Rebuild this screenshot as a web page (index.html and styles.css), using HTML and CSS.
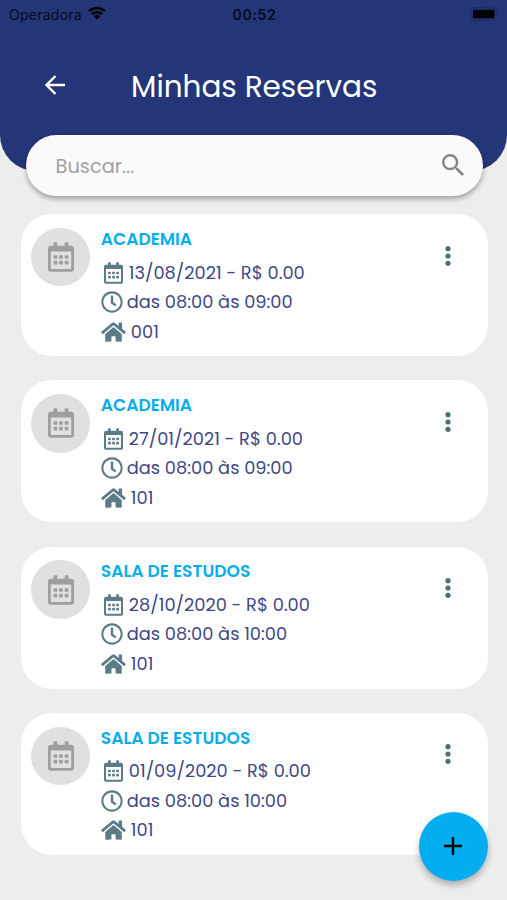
FILE: index.html
```html
<!DOCTYPE html>
<html lang="pt-BR">
<head>
<meta charset="utf-8">
<title>Minhas Reservas</title>
<link rel="stylesheet" href="styles.css">
</head>
<body>
<svg class="sprite" aria-hidden="true">
  <symbol id="calendar" viewBox="0 0 448 512"><path d="M148 288h-40c-6.600 0-12-5.400-12-12v-40c0-6.600 5.400-12 12-12h40c6.600 0 12 5.400 12 12v40c0 6.600-5.400 12-12 12zm108-12v-40c0-6.600-5.400-12-12-12h-40c-6.600 0-12 5.400-12 12v40c0 6.600 5.400 12 12 12h40c6.600 0 12-5.400 12-12zm96 0v-40c0-6.600-5.400-12-12-12h-40c-6.600 0-12 5.400-12 12v40c0 6.600 5.400 12 12 12h40c6.600 0 12-5.400 12-12zm-96 96v-40c0-6.600-5.400-12-12-12h-40c-6.600 0-12 5.400-12 12v40c0 6.600 5.400 12 12 12h40c6.600 0 12-5.400 12-12zm-96 0v-40c0-6.600-5.400-12-12-12h-40c-6.600 0-12 5.400-12 12v40c0 6.600 5.400 12 12 12h40c6.600 0 12-5.400 12-12zm192 0v-40c0-6.600-5.400-12-12-12h-40c-6.600 0-12 5.400-12 12v40c0 6.600 5.400 12 12 12h40c6.600 0 12-5.400 12-12zm96-260v352c0 26.500-21.500 48-48 48H48c-26.500 0-48-21.500-48-48V112c0-26.500 21.500-48 48-48h48V12c0-6.600 5.400-12 12-12h40c6.600 0 12 5.400 12 12v52h128V12c0-6.600 5.400-12 12-12h40c6.600 0 12 5.400 12 12v52h48c26.500 0 48 21.500 48 48zm-48 346V160H48v298c0 3.300 2.700 6 6 6h340c3.300 0 6-2.700 6-6z"/></symbol>
  <symbol id="clock" viewBox="0 0 512 512"><path d="M256 8C119 8 8 119 8 256s111 248 248 248 248-111 248-248S393 8 256 8zm0 448c-110.500 0-200-89.500-200-200S145.500 56 256 56s200 89.500 200 200-89.500 200-200 200zm61.800-104.400l-84.900-61.700c-3.100-2.300-4.900-5.900-4.900-9.700V116c0-6.600 5.400-12 12-12h32c6.600 0 12 5.400 12 12v141.700l66.800 48.600c5.400 3.900 6.500 11.400 2.600 16.800L334.600 349c-3.900 5.300-11.400 6.500-16.800 2.600z"/></symbol>
  <symbol id="home" viewBox="0 0 576 512"><path d="M280.370 148.260L96 300.110V464a16 16 0 0 0 16 16l112.060-.29a16 16 0 0 0 15.920-16V368a16 16 0 0 1 16-16h64a16 16 0 0 1 16 16v95.640a16 16 0 0 0 16 16.050L464 480a16 16 0 0 0 16-16V300L295.670 148.260a12.190 12.190 0 0 0-15.300 0zM571.600 251.470L488 182.560V44.050a12 12 0 0 0-12-12h-56a12 12 0 0 0-12 12v72.610L318.470 43a48 48 0 0 0-61 0L4.340 251.470a12 12 0 0 0-1.600 16.900l25.500 31A12 12 0 0 0 45.150 301l235.220-193.740a12.190 12.190 0 0 1 15.300 0L530.900 301a12 12 0 0 0 16.900-1.600l25.500-31a12 12 0 0 0-1.700-16.930z"/></symbol>
  <symbol id="dots" viewBox="0 0 6 20"><circle cx="3" cy="2.700" r="2.600"/><circle cx="3" cy="10" r="2.600"/><circle cx="3" cy="17.300" r="2.600"/></symbol>
</svg>
<div class="app">
  <header class="header">
    <div class="status">
      <div class="carrier"><span class="operator">Operadora</span>
        <svg class="wifi" viewBox="0 0 18 14"><path d="M1.200 5.200a11.200 11.200 0 0 1 15.600 0M4 8.200a7.200 7.200 0 0 1 10 0" fill="none" stroke="#000" stroke-width="2.500"/><path d="M5.800 10.200a4.700 4.700 0 0 1 6.400 0L9 13.500z"/></svg>
      </div>
      <span class="time">00:52</span>
      <svg class="battery" viewBox="0 0 30 14"><rect x="1" y=".7" width="25.500" height="12.300" rx="3.500" fill="none" stroke="#1b2a60"/><rect x="3" y="2.700" width="21.500" height="8.500" rx="1.500"/><path d="M28 5q1.300 1.800 0 3.700z" fill="#162453"/></svg>
    </div>
    <div class="bar">
      <svg class="back" viewBox="0 0 20 20"><path d="M20 10H1.500M10.500 1L1.500 10l9 9" fill="none" stroke="#fff" stroke-width="2.400"/></svg>
      <h1 class="title">Minhas Reservas</h1>
    </div>
  </header>
  <div class="search">
    <span class="placeholder">Buscar...</span>
    <svg class="lens" viewBox="3 3 17.500 17.500"><path d="M15.500 14h-.79l-.28-.27A6.471 6.471 0 0 0 16 9.500 6.500 6.500 0 1 0 9.500 16c1.610 0 3.090-.59 4.230-1.570l.27.280v.79l5 4.990L20.490 19l-4.990-5zm-6 0C7.010 14 5 11.990 5 9.500S7.010 5 9.500 5 14 7.010 14 9.500 11.990 14 9.500 14z"/></svg>
  </div>
  <main class="list">
    <article class="card">
      <div class="avatar"><svg class="avatar-icon"><use href="#calendar"/></svg></div>
      <div class="info">
        <h2 class="name">ACADEMIA</h2>
        <div class="row"><svg class="i-cal"><use href="#calendar"/></svg><span>13/08/2021 - R$ 0.00</span></div>
        <div class="row"><svg class="i-clock"><use href="#clock"/></svg><span>das 08:00 às 09:00</span></div>
        <div class="row"><svg class="i-home"><use href="#home"/></svg><span>001</span></div>
      </div>
      <svg class="dots"><use href="#dots"/></svg>
    </article>
    <article class="card">
      <div class="avatar"><svg class="avatar-icon"><use href="#calendar"/></svg></div>
      <div class="info">
        <h2 class="name">ACADEMIA</h2>
        <div class="row"><svg class="i-cal"><use href="#calendar"/></svg><span>27/01/2021 - R$ 0.00</span></div>
        <div class="row"><svg class="i-clock"><use href="#clock"/></svg><span>das 08:00 às 09:00</span></div>
        <div class="row"><svg class="i-home"><use href="#home"/></svg><span>101</span></div>
      </div>
      <svg class="dots"><use href="#dots"/></svg>
    </article>
    <article class="card">
      <div class="avatar"><svg class="avatar-icon"><use href="#calendar"/></svg></div>
      <div class="info">
        <h2 class="name">SALA DE ESTUDOS</h2>
        <div class="row"><svg class="i-cal"><use href="#calendar"/></svg><span>28/10/2020 - R$ 0.00</span></div>
        <div class="row"><svg class="i-clock"><use href="#clock"/></svg><span>das 08:00 às 10:00</span></div>
        <div class="row"><svg class="i-home"><use href="#home"/></svg><span>101</span></div>
      </div>
      <svg class="dots"><use href="#dots"/></svg>
    </article>
    <article class="card">
      <div class="avatar"><svg class="avatar-icon"><use href="#calendar"/></svg></div>
      <div class="info">
        <h2 class="name">SALA DE ESTUDOS</h2>
        <div class="row"><svg class="i-cal"><use href="#calendar"/></svg><span>01/09/2020 - R$ 0.00</span></div>
        <div class="row"><svg class="i-clock"><use href="#clock"/></svg><span>das 08:00 às 10:00</span></div>
        <div class="row"><svg class="i-home"><use href="#home"/></svg><span>101</span></div>
      </div>
      <svg class="dots"><use href="#dots"/></svg>
    </article>
  </main>
  <button class="fab" aria-label="+"><svg class="plus" viewBox="0 0 18 18"><path d="M9 0v18M0 9h18" stroke="#000" stroke-width="2.400"/></svg></button>
</div>
</body>
</html>
```
FILE: styles.css
```css
* { box-sizing: border-box; }
body { margin: 0; background: #ededed; font-family: Poppins, Inter, sans-serif; }
.sprite { position: absolute; width: 0; height: 0; }
svg { display: block; flex: none; }
h1, h2 { margin: 0; font-weight: 400; }
.app { position: relative; height: 900px; overflow: hidden; }
.header { height: 171px; background: #243678; border-radius: 0 0 36px 36px; }
.status { display: grid; grid-template-columns: 1fr auto 1fr; align-items: center; height: 28px; padding: 0 7px 0 9px; font-family: Inter, sans-serif; font-size: 14px; color: #050b20; }
.carrier { display: flex; align-items: center; gap: 6px; }
.operator { width: 73px; letter-spacing: .25px; }
.wifi { width: 18px; height: 14px; margin-top: -2px; }
.time { font-weight: 600; letter-spacing: .7px; }
.battery { width: 30px; height: 14px; margin-top: -1px; justify-self: end; }
.bar { display: flex; align-items: center; height: 60px; margin-top: 27px; padding-left: 45px; }
.back { width: 20px; height: 20px; }
.title { margin: 3px 0 0 66px; color: #fff; font-size: 29.500px; line-height: 40px; white-space: nowrap; }
.search { position: relative; display: flex; align-items: center; justify-content: space-between; width: 457px; height: 61px; margin: -36px 0 0 25.500px; padding: 0 19px 0 30px; border-radius: 31px; background: #fafafa; box-shadow: 0 3px 5px rgba(0,0,0,.32); }
.placeholder { margin-top: 2px; color: #a0a0a0; font-size: 19.400px; }
.lens { width: 22px; height: 22px; margin-top: -1px; fill: #858585; }
.list { display: flex; flex-direction: column; gap: 24.200px; padding: 18.300px 19.500px 0 20.500px; }
.card { display: flex; height: 142px; padding: 13.700px 36.500px 0 10.800px; border-radius: 31px; background: #fff; }
.avatar { display: flex; align-items: center; justify-content: center; width: 58.500px; height: 58.500px; border-radius: 50%; background: #e0e0e0; }
.avatar-icon { width: 26px; height: 30px; fill: #9e9e9e; }
.info { flex: 1; padding-left: 11px; color: #414885; }
.name { height: 24px; line-height: 24px; margin: -1px 0 6.300px; color: #08aeea; font-size: 17.100px; font-weight: 600; white-space: nowrap; }
.row { display: flex; align-items: center; height: 29.500px; font-size: 17.800px; white-space: nowrap; }
.row svg { fill: #5b7b87; }
.i-cal { width: 19px; height: 22px; margin: 1px 6px 0 3px; }
.i-clock { width: 22px; height: 22px; margin: 1px 4px 0 0; }
.i-home { width: 25px; height: 22px; margin: 1px 5px 0 0; }
.dots { width: 6px; height: 20px; margin-top: 17.800px; fill: #4c7079; }
.fab { position: absolute; left: 418.500px; top: 811.500px; display: flex; align-items: center; justify-content: center; width: 69px; height: 69px; padding: 0; border: 0; border-radius: 50%; background: #03adf0; box-shadow: 0 4px 7px rgba(0,0,0,.28); }
.plus { width: 18px; height: 18px; }
```
